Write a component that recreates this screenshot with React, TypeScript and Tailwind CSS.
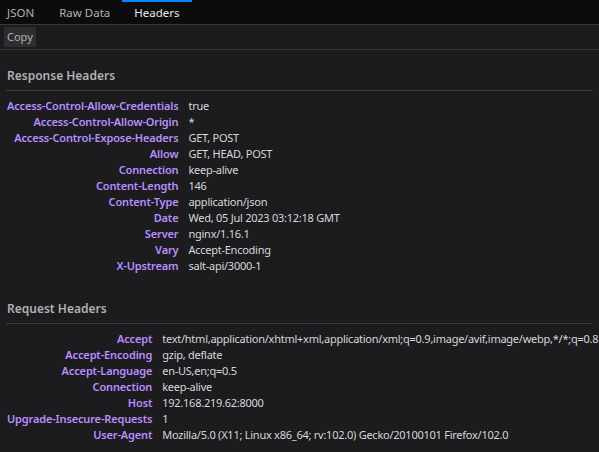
import clsx from "clsx"

const responseHeaders: [string, string][] = [
  ["Access-Control-Allow-Credentials", "true"],
  ["Access-Control-Allow-Origin", "*"],
  ["Access-Control-Expose-Headers", "GET, POST"],
  ["Allow", "GET, HEAD, POST"],
  ["Connection", "keep-alive"],
  ["Content-Length", "146"],
  ["Content-Type", "application/json"],
  ["Date", "Wed, 05 Jul 2023 03:12:18 GMT"],
  ["Server", "nginx/1.16.1"],
  ["Vary", "Accept-Encoding"],
  ["X-Upstream", "salt-api/3000-1"],
]

const requestHeaders: [string, string][] = [
  [
    "Accept",
    "text/html,application/xhtml+xml,application/xml;q=0.9,image/avif,image/webp,*/*;q=0.8",
  ],
  ["Accept-Encoding", "gzip, deflate"],
  ["Accept-Language", "en-US,en;q=0.5"],
  ["Connection", "keep-alive"],
  ["Host", "192.168.219.62:8000"],
  ["Upgrade-Insecure-Requests", "1"],
  ["User-Agent", "Mozilla/5.0 (X11; Linux x86_64; rv:102.0) Gecko/20100101 Firefox/102.0"],
]

const HeaderSection = ({
  title,
  rows,
}: {
  title: string
  rows: [string, string][]
}) => {
  return (
    <div className="flex flex-col">
      <div className="mx-[6px] border-b border-[#3a3a3e] pt-[17px] pb-[5px] pl-px text-[12px] font-semibold text-[#b1b1b3]">
        {title}
      </div>
      <table className="mt-[7px] border-collapse text-[11px]">
        <tbody>
          {rows.map(([key, value]) => (
            <tr key={key} className="h-[16px] leading-[16px]">
              <td className="w-px whitespace-nowrap pl-[7px] pr-[10px] text-right align-top font-semibold tracking-[-0.15px] text-[#b98eff]">
                {key}
              </td>
              <td className="whitespace-nowrap tracking-[-0.25px] text-[#d7d7db]">
                {value}
              </td>
            </tr>
          ))}
        </tbody>
      </table>
    </div>
  )
}

const tabs = ["JSON", "Raw Data", "Headers"]

export default function App() {
  return (
    <div
      className="flex h-[452px] w-[599px] flex-col overflow-hidden bg-[#1c1b1e]"
      style={{ fontFamily: '"Noto Sans", "Open Sans", sans-serif' }}
    >
      <div className="flex h-[25px] border-b border-[#38383d] bg-[#0c0c0d] text-[11.5px]">
        {tabs.map((tab, i) => (
          <div
            key={tab}
            className={clsx(
              "flex items-center border-t-2 leading-none",
              i === 0 ? "pl-[7px] pr-[13px]" : "px-[12px]",
              tab === "Headers"
                ? "border-[#0a84ff] text-[#e9e9eb]"
                : "border-transparent text-[#b1b1b3]",
            )}
          >
            {tab}
          </div>
        ))}
      </div>
      <div className="flex h-[25px] items-center border-b border-[#38383d] bg-[#1c1b1e] px-[4px]">
        <button className="h-[20px] rounded-[2px] bg-[#2e2e31] px-[3px] text-[11px] text-[#b1b1b3]">
          Copy
        </button>
      </div>
      <HeaderSection title="Response Headers" rows={responseHeaders} />
      <div className="h-[9px]" />
      <HeaderSection title="Request Headers" rows={requestHeaders} />
    </div>
  )
}
